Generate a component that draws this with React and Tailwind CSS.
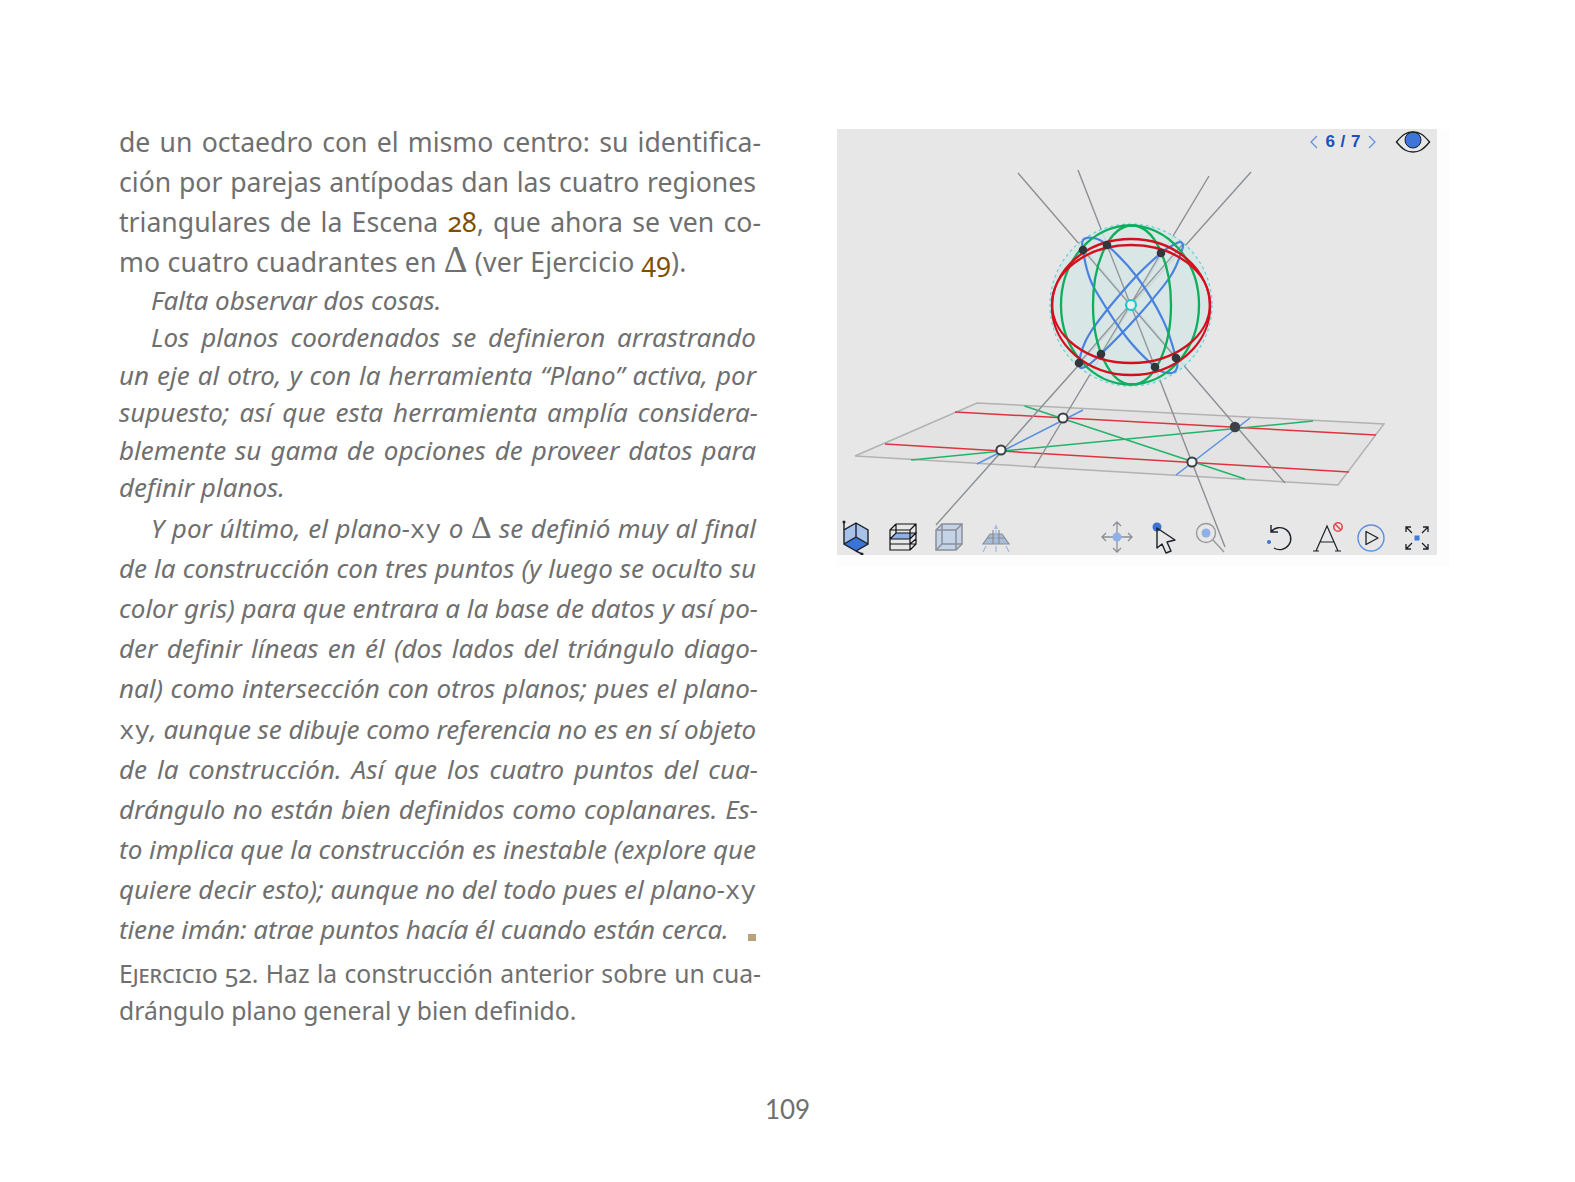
import React from "react";

// una línea del texto ya compuesta, como en el libro
const Line = ({ children, h = "h-[40px]", w = "w-[637px]", indent, left }) => (
  <div
    className={`whitespace-nowrap ${h} ${w} ${indent ? "pl-[32px]" : ""} ${
      left ? "" : "[text-align-last:justify]"
    }`}
  >
    {children}
  </div>
);

const Xy = () => <span className="font-['Liberation_Mono'] not-italic text-[26px] font-light">xy</span>;
const Delta = ({ big }) => (
  <span className={`font-['Liberation_Serif'] not-italic leading-[0] ${big ? "text-[37px]" : "text-[32px]"}`}>Δ</span>
);
const Ref = ({ children }) => <span className="text-[#7d5000]">{children}</span>;

// curva cerrada suave por una lista de puntos
const smooth = (pts) => {
  let d = `M${pts[0][0]} ${pts[0][1]}`;
  const n = pts.length;
  for (let i = 0; i < n; i++) {
    const p0 = pts[(i - 1 + n) % n];
    const p1 = pts[i];
    const p2 = pts[(i + 1) % n];
    const p3 = pts[(i + 2) % n];
    d += `C${p1[0] + (p2[0] - p0[0]) / 6} ${p1[1] + (p2[1] - p0[1]) / 6} ${p2[0] - (p3[0] - p1[0]) / 6} ${p2[1] - (p3[1] - p1[1]) / 6} ${p2[0]} ${p2[1]}`;
  }
  return d + "Z";
};

const blue1 = [[1083, 240], [1083, 250], [1088, 273], [1097, 293], [1127, 338], [1155, 367], [1167, 373], [1176, 370], [1176, 358], [1163, 320], [1137, 277], [1107, 245], [1093, 238]];
const blue2 = [[1182, 243], [1177, 243], [1161, 253], [1130, 283], [1090, 333], [1079, 363], [1085, 367], [1101, 354], [1137, 317], [1170, 277], [1182, 250]];

const CubeIcon = () => (
  <svg viewBox="0 0 36 36" className="w-9 h-9">
    <path d="M18 4 30 11V25L18 18ZM18 4 6 11V25L18 18Z" fill="#a9c2ea" />
    <path d="M6 25 18 18 30 25 18 32Z" fill="#3b73d6" />
    <path d="M18 4 30 11V25L18 32 6 25V11ZM18 4V18M6 25 18 18 30 25" fill="none" stroke="#1c2128" strokeWidth="1.4" />
    <path d="M6 11V3M18 32 24 35" stroke="#1c2128" strokeWidth="1.4" />
    <circle cx="6" cy="3" r="1.5" fill="#1c2128" />
    <circle cx="24" cy="35" r="1.5" fill="#1c2128" />
  </svg>
);

const GridCubeIcon = () => (
  <svg viewBox="0 0 36 36" className="w-9 h-9" fill="none" stroke="#111" strokeWidth="1.2">
    <path d="M5 20 11 14H31L25 20Z" fill="#8fb0e6" stroke="none" />
    <path d="M5 11H25V31H5ZM11 5H31V25H25M11 5V14M5 11 11 5M25 11 31 5M25 31 31 25M5 20H25L31 14H11L5 20M5 25H25L31 20" />
  </svg>
);

const GrayCubeIcon = () => (
  <svg viewBox="0 0 36 36" className="w-9 h-9" fill="none" stroke="#8a8f96" strokeWidth="1.5">
    <path d="M5 11 11 5H31V25L25 31H5Z" fill="#c5d3e8" />
    <path d="M5 11H25V31M25 11 31 5M11 5V25H31M5 31 11 25M11 25H25" />
  </svg>
);

const PerspectiveIcon = () => (
  <svg viewBox="0 0 36 36" className="w-9 h-9">
    <path d="M12 15H24L31 25H5Z" fill="#a9bcd8" stroke="#8a8f96" strokeWidth="1.2" />
    <path d="M15 11V25M21 11V25M9 19H27" stroke="#8a8f96" strokeWidth="1.2" />
    <path d="M18 5 20 10H16Z" fill="#9dbcec" />
    <path d="M18 11V23M18 27V33M8 27 5 33M28 27 31 33" stroke="#9dbcec" strokeWidth="1.3" />
  </svg>
);

const MoveIcon = () => (
  <svg viewBox="0 0 36 36" className="w-9 h-9" fill="none" stroke="#8a8f96" strokeWidth="1.3">
    <path d="M3 18H33M18 3V33M7 14 3 18 7 22M29 14 33 18 29 22M14 7 18 3 22 7M14 29 18 33 22 29" />
    <circle cx="18" cy="18" r="4.5" fill="#8fb0e6" stroke="none" />
  </svg>
);

const PointerIcon = () => (
  <svg viewBox="0 0 36 36" className="w-9 h-9">
    <circle cx="12" cy="8" r="4.5" fill="#3b73d6" />
    <path d="M12 9 V29 L17 25 L21 34 L26 32 L22 23 L30 21 Z" fill="none" stroke="#1c2128" strokeWidth="1.4" strokeLinejoin="round" />
  </svg>
);

const ZoomIcon = () => (
  <svg viewBox="0 0 36 36" className="w-9 h-9" fill="none" stroke="#999" strokeWidth="1.4">
    <circle cx="14" cy="14" r="9.5" />
    <circle cx="14" cy="14" r="4.5" fill="#8fb0e6" stroke="none" />
    <path d="M21 21 32 33" />
  </svg>
);

const ResetIcon = () => (
  <svg viewBox="0 0 36 36" className="w-9 h-9" fill="none" stroke="#1c2128" strokeWidth="1.4">
    <path d="M10 13A11 11 0 1 1 13 29M10 6V13H17" />
    <circle cx="8" cy="23" r="2" fill="#3b73d6" stroke="none" />
  </svg>
);

const FontOffIcon = () => (
  <svg viewBox="0 0 36 36" className="w-9 h-9" fill="none" stroke="#1c2128" strokeWidth="1.2">
    <path d="M9 32 20 7 31 32M13 23H27M6 32H12M28 32H34" />
    <circle cx="31" cy="8" r="4.2" stroke="#e04a4a" strokeWidth="1.6" />
    <path d="M28 5 34 11" stroke="#e04a4a" strokeWidth="1.6" />
  </svg>
);

const PlayIcon = () => (
  <svg viewBox="0 0 36 36" className="w-9 h-9" fill="none">
    <circle cx="18" cy="19" r="13" stroke="#5b8fe0" strokeWidth="1.4" />
    <path d="M13 12.5V25.5L25 19Z" stroke="#1c2128" strokeWidth="1.3" strokeLinejoin="round" />
  </svg>
);

const FullscreenIcon = () => (
  <svg viewBox="0 0 36 36" className="w-9 h-9" fill="none" stroke="#1c2128" strokeWidth="1.3">
    <rect x="15.5" y="16.5" width="5" height="5" fill="#3d7be0" stroke="none" />
    <path d="M13 14 7 8M7 13V8H12M23 14 29 8M24 8H29V13M13 24 7 30M7 25V30H12M23 24 29 30M29 25V30H24" />
  </svg>
);

const EyeIcon = () => (
  <svg viewBox="0 0 36 24" className="w-[36px] h-[24px]">
    <circle cx="18" cy="10" r="8" fill="#3f74d8" stroke="#1c2128" strokeWidth="1" />
    <path d="M1.5 12C8 4 12 2 18 2S28 4 34.5 12C28 20 24 22 18 22S8 20 1.5 12Z" fill="none" stroke="#1c2128" strokeWidth="1.4" />
  </svg>
);

const Dot = ({ x, y }) => <circle cx={x} cy={y} r="4.3" fill="#33373b" />;
const OpenDot = ({ x, y }) => <circle cx={x} cy={y} r="4.6" fill="#f4f4f4" stroke="#3a3f44" strokeWidth="2" />;

const Diagram = () => (
  <svg viewBox="837 129 600 426" className="absolute inset-0 w-full h-full" fill="none">
    {/* plano */}
    <path d="M977 403 1384 424 1338 485 855 456Z" fill="#e3e3e3" stroke="#b2b2b2" strokeWidth="1.5" />
    <path d="M955 412 1376 435M885 444 1349 472" stroke="#df3340" strokeWidth="1.5" />
    <path d="M1024.5 406 1245 479M911 460 1313 421" stroke="#22b36b" strokeWidth="1.5" />
    <path d="M977 464 1083 410M1176 475 1250 418" stroke="#5b8fe0" strokeWidth="1.5" />

    {/* rectas */}
    <path d="M1018 173 1285 483M1078 170 1225 547M1209 176 1034 468M1251 172 936 525" stroke="#8c8f93" strokeWidth="1.4" />

    {/* esfera */}
    <circle cx="1131" cy="305" r="81" fill="#d5e5e5" fillOpacity="0.85" stroke="#5fd2d8" strokeWidth="1.2" strokeDasharray="3 3" />
    <path d="M1083 250 1176 358M1107 245 1155 367M1161 253 1101 354M1182 245 1079 363" stroke="#92979b" strokeWidth="1.3" />
    <path d={smooth(blue1)} stroke="#4a82e0" strokeWidth="2.2" />
    <path d={smooth(blue2)} stroke="#4a82e0" strokeWidth="2.2" />
    <ellipse cx="1130" cy="305" rx="69" ry="79.5" stroke="#0fae5c" strokeWidth="2.3" />
    <ellipse cx="1132" cy="305" rx="39" ry="79.5" stroke="#0fae5c" strokeWidth="2.3" />
    <ellipse cx="1131" cy="307" rx="79" ry="68" stroke="#d4101e" strokeWidth="2.3" />
    <ellipse cx="1131" cy="304" rx="79" ry="59" stroke="#d4101e" strokeWidth="2.3" />
    <circle cx="1131" cy="305" r="5" fill="#e8f0f0" stroke="#1cc8d0" strokeWidth="2.2" />

    <Dot x={1083} y={250} />
    <Dot x={1107} y={245} />
    <Dot x={1161} y={253} />
    <Dot x={1079} y={363} />
    <Dot x={1101} y={354} />
    <Dot x={1155} y={367} />
    <Dot x={1176} y={358} />

    <OpenDot x={1001} y={450} />
    <OpenDot x={1063} y={418} />
    <OpenDot x={1192} y={462} />
    <circle cx="1235" cy="427" r="5.2" fill="#3c4248" />
  </svg>
);

export default function App() {
  return (
    <div className="w-[1575px] h-[1182px] bg-white text-[#6f6f6f] font-['Noto_Sans',sans-serif] flex flex-col overflow-hidden">
      <div className="flex flex-1 pt-[122px]">
        {/* columna de texto */}
        <div className="w-[718px] pl-[119px] leading-[40px] oldstyle-nums">
          <div className="text-[26.6px]">
            <Line w="w-[642px]">de un octaedro con el mismo centro: su identifica-</Line>
            <Line>ción por parejas antípodas dan las cuatro regiones</Line>
            <Line w="w-[642px]">
              triangulares de la Escena <Ref>28</Ref>, que ahora se ven co-
            </Line>
            <Line left>
              <span className="tracking-[0.2px]">
                mo cuatro cuadrantes en <Delta big /> (ver Ejercicio <Ref>49</Ref>).
              </span>
            </Line>
          </div>
          <div className="italic text-[26px]">
            <div className="leading-[37px]">
              <Line indent left h="h-[37px]">
                Falta observar dos cosas.
              </Line>
            </div>
            <div className="leading-[37.5px]">
              <Line indent h="h-[37.5px]">Los planos coordenados se definieron arrastrando</Line>
              <Line h="h-[37.5px]">un eje al otro, y con la herramienta “Plano” activa, por</Line>
              <Line h="h-[37.5px]" w="w-[639px]">supuesto; así que esta herramienta amplía considera-</Line>
              <Line h="h-[37.5px]">blemente su gama de opciones de proveer datos para</Line>
              <Line left h="h-[39px]">definir planos.</Line>
            </div>
            <Line indent>
              Y por último, el plano-<Xy /> o <Delta /> se definió muy al final
            </Line>
            <Line>de la construcción con tres puntos (y luego se oculto su</Line>
            <Line w="w-[639px]">color gris) para que entrara a la base de datos y así po-</Line>
            <Line w="w-[639px]">der definir líneas en él (dos lados del triángulo diago-</Line>
            <Line w="w-[639px]" h="h-[41px]">nal) como intersección con otros planos; pues el plano-</Line>
            <Line>
              <span className="tracking-[-0.1px]">
                <Xy />, aunque se dibuje como referencia no es en sí objeto
              </span>
            </Line>
            <Line w="w-[639px]">de la construcción. Así que los cuatro puntos del cua-</Line>
            <Line w="w-[639px]">drángulo no están bien definidos como coplanares. Es-</Line>
            <Line>to implica que la construcción es inestable (explore que</Line>
            <Line>
              quiere decir esto); aunque no del todo pues el plano-<Xy />
            </Line>
            <div className="flex h-[46px] w-[637px] justify-between whitespace-nowrap">
              <span className="tracking-[-0.13px]">tiene imán: atrae puntos hacía él cuando están cerca.</span>
              <span className="mt-[25px] h-[7px] w-[8px] bg-[#b9a27c]" />
            </div>
          </div>
          <div className="leading-[37.3px] text-[24.7px]">
            <Line w="w-[642px]" h="h-[37.3px]">
              <span className="[font-variant-caps:small-caps]">Ejercicio</span> 52. Haz la construcción anterior sobre un cua-
            </Line>
            <Line left h="h-[37.3px]">drángulo plano general y bien definido.</Line>
          </div>
        </div>

        {/* escena */}
        <div className="ml-[119px] mt-[7px] w-[613px] h-[437px] bg-[#fdfdfd] self-start">
          <div className="relative w-[600px] h-[426px] bg-[#e7e7e7] flex flex-col justify-between">
            <Diagram />
            <div className="relative flex items-center justify-end h-[25px] pr-[6px]">
              <svg viewBox="0 0 10 16" className="w-[10px] h-[16px]" fill="none" stroke="#5b8fe0" strokeWidth="1.2">
                <path d="M8 2 2 8 8 14" />
              </svg>
              <span className="mx-[6px] font-['Liberation_Sans',sans-serif] font-bold text-[17px] leading-none text-[#1a4fc0] tracking-[0.5px]">
                6 / 7
              </span>
              <svg viewBox="0 0 10 16" className="w-[10px] h-[16px]" fill="none" stroke="#5b8fe0" strokeWidth="1.2">
                <path d="M2 2 8 8 2 14" />
              </svg>
              <div className="ml-[18px]">
                <EyeIcon />
              </div>
            </div>
            <div className="relative flex items-center pl-px h-[36px]">
              <div className="flex gap-[10.5px]">
                <CubeIcon />
                <GridCubeIcon />
                <GrayCubeIcon />
                <PerspectiveIcon />
              </div>
              <div className="flex gap-[10.5px] ml-[85px]">
                <MoveIcon />
                <PointerIcon />
                <ZoomIcon />
              </div>
              <div className="flex gap-[10px] ml-[33px]">
                <ResetIcon />
                <FontOffIcon />
                <PlayIcon />
                <FullscreenIcon />
              </div>
            </div>
          </div>
        </div>
      </div>

      <div className="text-center h-[93px] text-[26px] leading-[40px] font-['Lato',sans-serif]">109</div>
    </div>
  );
}
